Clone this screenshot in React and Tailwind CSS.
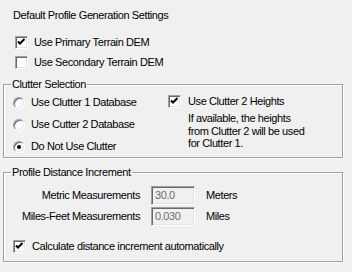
import React from "react";

const Check = ({ checked }) => (
  <span className="relative block w-[13px] h-[13px] shrink-0 bg-white border border-t-[#a0a0a0] border-l-[#a0a0a0] border-b-white border-r-white shadow-[inset_1px_1px_0_#696969,inset_-1px_-1px_0_#e3e3e3]">
    {checked && (
      <svg className="absolute left-0 top-0" width="11" height="11" viewBox="0 0 11 11">
        <path d="M2 4.5 L4 6.5 L8.5 2" fill="none" stroke="#000" strokeWidth="2" />
      </svg>
    )}
  </span>
);

const Radio = ({ checked }) => (
  <span className="relative flex items-center justify-center w-[12px] h-[12px] shrink-0 rounded-full bg-white border border-t-[#a0a0a0] border-l-[#a0a0a0] border-b-white border-r-white shadow-[inset_1px_1px_0_#696969,inset_-1px_-1px_0_#e3e3e3]">
    {checked && <span className="block w-[4px] h-[4px] rounded-full bg-black" />}
  </span>
);

const Group = ({ title, className, children }) => (
  <fieldset
    className={
      "mx-[3px] w-[340px] border border-[#a0a0a0] shadow-[1px_1px_0_#fff,inset_1px_1px_0_#fff] " +
      className
    }
  >
    <legend className="ml-[7px] px-[1px] leading-[13px]">{title}</legend>
    {children}
  </fieldset>
);

const Field = ({ value }) => (
  <div className="w-[44px] h-[19px] flex items-center pl-[3px] text-[#6d6d6d] border border-t-[#a0a0a0] border-l-[#a0a0a0] border-b-white border-r-white shadow-[inset_1px_1px_0_#696969,inset_-1px_-1px_0_#e3e3e3]">
    {value}
  </div>
);

export default function App() {
  return (
    <div
      className="w-[352px] h-[272px] overflow-hidden bg-[#f0f0f0] text-black text-[11px] leading-[13px] tracking-[-0.4px]"
      style={{ fontFamily: '"Liberation Sans", Arial, sans-serif' }}
    >
      <div className="pl-[13px] pt-[9px]">Default Profile Generation Settings</div>

      <div className="pl-[15px] pt-[14px] flex flex-col gap-[7px]">
        <label className="flex items-center gap-[6px]">
          <Check checked />
          <span>Use Primary Terrain DEM</span>
        </label>
        <label className="flex items-center gap-[6px]">
          <Check />
          <span>Use Secondary Terrain DEM</span>
        </label>
      </div>

      <Group title="Clutter Selection" className="mt-[9px] h-[80px]">
        <div className="flex pt-[4px]">
          <div className="w-[160px] pl-[9px] flex flex-col gap-[9px] pt-[1px]">
            <label className="flex items-center gap-[6px]">
              <Radio />
              <span>Use Clutter 1 Database</span>
            </label>
            <label className="flex items-center gap-[6px]">
              <Radio />
              <span>Use Cutter 2 Database</span>
            </label>
            <label className="flex items-center gap-[6px]">
              <Radio checked />
              <span>Do Not Use Clutter</span>
            </label>
          </div>
          <div className="pl-[4px]">
            <label className="flex items-center gap-[7px]">
              <Check checked />
              <span>Use Clutter 2 Heights</span>
            </label>
            <p className="pl-[20px] pt-[4px] leading-[12.5px]">
              If available, the heights
              <br />
              from Clutter 2 will be used
              <br />
              for Clutter 1.
            </p>
          </div>
        </div>
      </Group>

      <Group title="Profile Distance Increment" className="mt-[8px] h-[96px]">
        <div className="grid grid-cols-[136px_44px_auto] items-center gap-x-[11px] gap-y-[2px] pt-[7px]">
          <span className="text-right">Metric Measurements</span>
          <Field value="30.0" />
          <span>Meters</span>
          <span className="text-right">Miles-Feet Measurements</span>
          <Field value="0.030" />
          <span>Miles</span>
        </div>
        <label className="flex items-center gap-[6px] pl-[9px] pt-[14px]">
          <Check checked />
          <span>Calculate distance increment automatically</span>
        </label>
      </Group>
    </div>
  );
}
